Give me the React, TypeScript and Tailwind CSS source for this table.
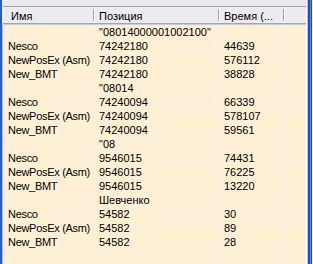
import React from "react";

type Row = [string, string, string];

const rows: Row[] = [
  ["", '"08014000001002100"', ""],
  ["Nesco", "74242180", "44639"],
  ["NewPosEx (Asm)", "74242180", "576112"],
  ["New_BMT", "74242180", "38828"],
  ["", '"08014', ""],
  ["Nesco", "74240094", "66339"],
  ["NewPosEx (Asm)", "74240094", "578107"],
  ["New_BMT", "74240094", "59561"],
  ["", '"08', ""],
  ["Nesco", "9546015", "74431"],
  ["NewPosEx (Asm)", "9546015", "76225"],
  ["New_BMT", "9546015", "13220"],
  ["", "Шевченко", ""],
  ["Nesco", "54582", "30"],
  ["NewPosEx (Asm)", "54582", "89"],
  ["New_BMT", "54582", "28"],
  ["", "", ""],
];

function HeaderCell({ w, label, pl }: { w: string; label: string; pl: string }) {
  return (
    <div className={`${w} flex h-full shrink-0`}>
      <div className="w-px bg-white" />
      <div className={`flex-1 ${pl} pt-[1px] leading-[16px] whitespace-nowrap overflow-hidden`}>{label}</div>
      <div className="w-px my-[2px] bg-[#a7a6ab]" />
    </div>
  );
}

export default function App() {
  return (
    <div
      className="w-[313px] h-[264px] flex overflow-hidden bg-[#ffefd5] text-black text-[11px]"
      style={{ fontFamily: '"Liberation Sans", Arial, sans-serif' }}
    >
      {/* left frame */}
      <div className="w-[2px] shrink-0 bg-[#2b5bd1]" />
      <div className="w-px shrink-0 flex flex-col">
        <div className="h-[25px] bg-[#ebeaf0]" />
        <div className="flex-1 bg-[#a9bef0]" />
      </div>

      {/* main list */}
      <div className="w-[303px] shrink-0 flex flex-col">
        <div className="h-[6px] bg-[#e9e8ee]" />
        <div className="h-[19px] flex flex-col">
          <div className="h-px bg-[#a3a3a8]" />
          <div className="h-[16px] flex bg-[#ecebf0]">
            <HeaderCell w="w-[91px]" label="Имя" pl="pl-[7px]" />
            <HeaderCell w="w-[125px]" label="Позиция" pl="pl-[4px]" />
            <HeaderCell w="w-[65px]" label="Время (..." pl="pl-[4px]" />
            <div className="flex-1 flex">
              <div className="w-px bg-white" />
              <div className="flex-1" />
            </div>
          </div>
          <div className="h-px bg-[#a5a5aa]" />
          <div className="h-px bg-[#cbcbd0]" />
        </div>
        <div className="flex flex-col">
          {rows.map((r, i) => (
            <div key={i} className="h-[14px] shrink-0 flex border-t border-[#f0f0f0]">
              <div className="w-[91px] shrink-0 border-r border-[#f0f0f0] pl-[5px] leading-[13px] tracking-[-0.3px] whitespace-nowrap overflow-hidden">
                {r[0]}
              </div>
              <div className="w-[125px] shrink-0 border-r border-[#f0f0f0] pl-[5px] leading-[13px] whitespace-nowrap overflow-hidden">
                {r[1]}
              </div>
              <div className="w-[65px] shrink-0 border-r border-[#f0f0f0] pl-[5px] leading-[13px] whitespace-nowrap overflow-hidden">
                {r[2]}
              </div>
              <div className="flex-1 border-r border-[#f0f0f0]" />
            </div>
          ))}
        </div>
      </div>

      {/* right frame */}
      <div className="w-px shrink-0 bg-[#fbfbfd]" />
      <div className="w-px shrink-0 bg-[#c2c3cf]" />
      <div className="w-[2px] shrink-0 bg-[#1d4ccc]" />
      <div className="w-px shrink-0 bg-[#5b88ee]" />
      <div className="w-px shrink-0 bg-[#1f4bc2]" />
    </div>
  );
}
